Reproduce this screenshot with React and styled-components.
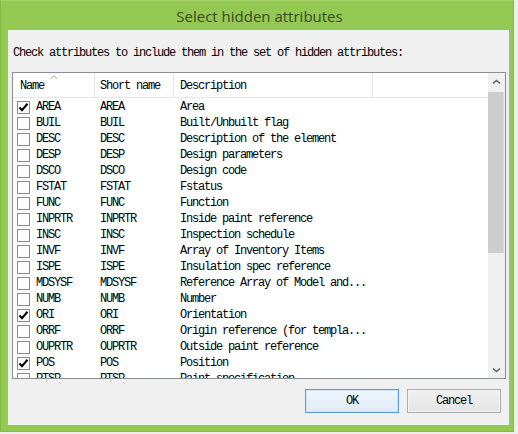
import React from "react";
import styled, { createGlobalStyle } from "styled-components";

const Global = createGlobalStyle`
  html, body { margin: 0; padding: 0; background: #eeeeee; }
  * { box-sizing: border-box; }
`;

const mono = `"Liberation Mono", "DejaVu Sans Mono", monospace`;

const Window = styled.div`
  width: 514px;
  height: 432px;
  background: #93c852;
  border: 1px solid #82b940;
  border-top-color: #a6d46a;
  display: flex;
  flex-direction: column;
`;

const TitleBar = styled.div`
  height: 29px;
  display: flex;
  align-items: center;
  justify-content: center;
  padding-left: 5px;
  font-family: "Open Sans", "Noto Sans", sans-serif;
  font-size: 15px;
  color: #3a482f;
`;

const Client = styled.div`
  flex: 1;
  margin: 0 4px 6px 7px;
  background: #f0f0f0;
  display: flex;
  flex-direction: column;
  padding: 14px 3px 12px 4px;
  font-family: ${mono};
  font-size: 12px;
  letter-spacing: -1.2px;
  color: #000;
`;

const Prompt = styled.div`
  height: 16px;
  line-height: 16px;
  padding-left: 1px;
  padding-top: 1px;
  white-space: nowrap;
`;

const ListBox = styled.div`
  margin-top: 12px;
  height: 307px;
  border: 1px solid #8a8e96;
  background: #fff;
  display: flex;
`;

const ListMain = styled.div`
  flex: 1;
  display: flex;
  flex-direction: column;
  overflow: hidden;
`;

const cols = `82px 79px 199px 1fr`;

const HeaderRow = styled.div`
  height: 25px;
  flex: none;
  display: grid;
  grid-template-columns: ${cols};
  border-bottom: 1px solid #e5e5e5;
`;

const HeaderCell = styled.div`
  position: relative;
  display: flex;
  align-items: center;
  padding-left: ${(p) => p.$pad}px;
  padding-top: 2px;
  border-right: ${(p) => (p.$last ? "none" : "1px solid #e5e5e5")};
  white-space: nowrap;
`;

const SortArrow = styled.svg`
  position: absolute;
  left: 37px;
  top: 2px;
`;

const Rows = styled.div`
  flex: 1;
  overflow: hidden;
  padding-top: 1px;
`;

const Row = styled.div`
  height: 16px;
  display: grid;
  grid-template-columns: ${cols};
  align-items: center;
  white-space: nowrap;
`;

const Cell = styled.div`
  display: flex;
  align-items: center;
  padding-left: ${(p) => p.$pad}px;
  overflow: hidden;
`;

const Box = styled.span`
  width: 13px;
  height: 13px;
  flex: none;
  border: 1px solid #8a8b8b;
  background: #fff;
  margin-right: 6px;
  display: flex;
  align-items: center;
  justify-content: center;
`;

const ScrollBar = styled.div`
  width: 17px;
  flex: none;
  background: #f0f0f0;
  display: flex;
  flex-direction: column;
`;

const ScrollBtn = styled.div`
  height: 17px;
  flex: none;
  display: flex;
  align-items: center;
  justify-content: center;
`;

const Track = styled.div`
  flex: 1;
  display: flex;
  flex-direction: column;
`;

const Thumb = styled.div`
  margin: 2px 1px 0 0;
  height: 161px;
  background: #cdcdcd;
  border-right: 1px solid #d9d9d9;
`;

const ButtonRow = styled.div`
  margin-top: 10px;
  display: flex;
  justify-content: flex-end;
  gap: 8px;
  padding-right: 5px;
`;

const Button = styled.button`
  width: 94px;
  height: 24px;
  font-family: ${mono};
  font-size: 12px;
  letter-spacing: -1.2px;
  color: #000;
  padding: 0;
  border: 1px solid ${(p) => (p.$default ? "#5c9bd8" : "#acacac")};
  box-shadow: inset 0 0 0 1px ${(p) => (p.$default ? "#cde3f7" : "#f4f4f4")};
  background: ${(p) =>
    p.$default
      ? "linear-gradient(#eef5fc, #e1ecf8)"
      : "linear-gradient(#f0f0f0, #e5e5e5)"};
`;

const Chevron = ({ down }) => (
  <svg width="9" height="6" viewBox="0 0 9 6">
    <path
      d={down ? "M1 1.5 L4.5 4.5 L8 1.5" : "M1 4.5 L4.5 1.5 L8 4.5"}
      fill="none"
      stroke="#606060"
      strokeWidth="1.6"
    />
  </svg>
);

const Check = () => (
  <svg width="11" height="11" viewBox="0 0 11 11">
    <path d="M1.5 5.5 L4 8.2 L9.5 1.8" fill="none" stroke="#000" strokeWidth="2.1" />
  </svg>
);

const rows = [
  ["AREA", "AREA", "Area", true],
  ["BUIL", "BUIL", "Built/Unbuilt flag"],
  ["DESC", "DESC", "Description of the element"],
  ["DESP", "DESP", "Design parameters"],
  ["DSCO", "DSCO", "Design code"],
  ["FSTAT", "FSTAT", "Fstatus"],
  ["FUNC", "FUNC", "Function"],
  ["INPRTR", "INPRTR", "Inside paint reference"],
  ["INSC", "INSC", "Inspection schedule"],
  ["INVF", "INVF", "Array of Inventory Items"],
  ["ISPE", "ISPE", "Insulation spec reference"],
  ["MDSYSF", "MDSYSF", "Reference Array of Model and..."],
  ["NUMB", "NUMB", "Number"],
  ["ORI", "ORI", "Orientation", true],
  ["ORRF", "ORRF", "Origin reference (for templa..."],
  ["OUPRTR", "OUPRTR", "Outside paint reference"],
  ["POS", "POS", "Position", true],
  ["PTSP", "PTSP", "Paint specification"],
];

export default function App() {
  return (
    <>
      <Global />
      <Window>
        <TitleBar>Select hidden attributes</TitleBar>
        <Client>
          <Prompt>Check attributes to include them in the set of hidden attributes:</Prompt>
          <ListBox>
            <ListMain>
              <HeaderRow>
                <HeaderCell $pad={7}>
                  Name
                  <SortArrow width="8" height="5" viewBox="0 0 8 5">
                    <path d="M0.5 4 L4 0.8 L7.5 4" fill="none" stroke="#9aa9bd" strokeWidth="1" />
                  </SortArrow>
                </HeaderCell>
                <HeaderCell $pad={5}>Short name</HeaderCell>
                <HeaderCell $pad={6}>Description</HeaderCell>
                <HeaderCell $last $pad={0} />
              </HeaderRow>
              <Rows>
                {rows.map(([n, s, d, c]) => (
                  <Row key={n}>
                    <Cell $pad={4}>
                      <Box>{c && <Check />}</Box>
                      {n}
                    </Cell>
                    <Cell $pad={5}>{s}</Cell>
                    <Cell $pad={6}>{d}</Cell>
                    <Cell $pad={0} />
                  </Row>
                ))}
              </Rows>
            </ListMain>
            <ScrollBar>
              <ScrollBtn>
                <Chevron />
              </ScrollBtn>
              <Track>
                <Thumb />
              </Track>
              <ScrollBtn>
                <Chevron down />
              </ScrollBtn>
            </ScrollBar>
          </ListBox>
          <ButtonRow>
            <Button $default>OK</Button>
            <Button>Cancel</Button>
          </ButtonRow>
        </Client>
      </Window>
    </>
  );
}
